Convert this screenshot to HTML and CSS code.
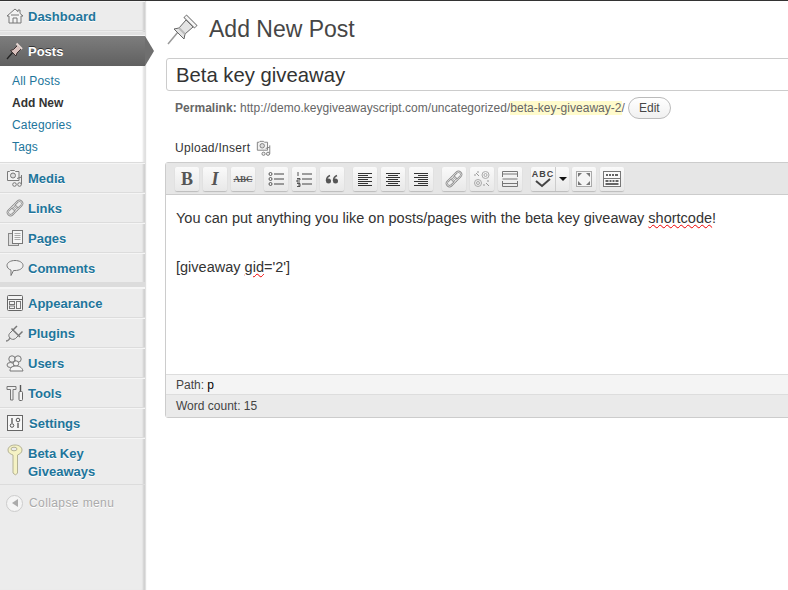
FILE: index.html
```html
<!DOCTYPE html>
<html lang="en">
<head>
  <meta charset="UTF-8">
  <title>Add New Post</title>
  <link rel="stylesheet" href="styles.css">
</head>
<body>
  <svg class="defs" width="0" height="0">
    <symbol id="i-media" viewBox="0 0 18 18">
      <path d="M1.500 2.500h2l1-1h4l1 1h3.500v9H1.500z" fill="#f2f2f2" stroke="#7a7a7a"/>
      <circle cx="7" cy="6.500" r="2.500" fill="#ddd" stroke="#777"/>
      <path d="M15.500 6v9.500M11 9.500l4.500-1.500" fill="none" stroke="#777"/>
      <circle cx="8.500" cy="15.500" r="1.800" fill="#eee" stroke="#777"/>
      <circle cx="13.500" cy="15.500" r="1.800" fill="#eee" stroke="#777"/>
    </symbol>
    <symbol id="i-link" viewBox="0 0 20 20">
      <g transform="rotate(-45 10 10)" fill="none">
        <rect x="0" y="7" width="12" height="6" rx="3" stroke="#8a8a8a" stroke-width="2.400"/>
        <rect x="8" y="7" width="12" height="6" rx="3" stroke="#8a8a8a" stroke-width="2.400"/>
        <rect x="0" y="7" width="12" height="6" rx="3" stroke="#f4f4f4" stroke-width=".8"/>
        <rect x="8" y="7" width="12" height="6" rx="3" stroke="#f4f4f4" stroke-width=".8"/>
      </g>
    </symbol>
  </svg>

  <div class="topline"></div>
  <div class="layout">
    <nav class="sidebar">
      <a class="item">
        <svg class="ico" viewBox="0 0 18 18"><path d="M1 9l8-7 3 2.600V3h2v3.400L17 9h-2v7H3V9z" fill="#f3f3f3" stroke="#777"/><path d="M7 16v-5h4v5M5 8h8" fill="none" stroke="#777"/></svg>
        Dashboard
      </a>
      <div class="sep"></div>
      <a class="item current">
        <svg class="ico" viewBox="0 0 18 18"><path d="M1 17l6-7" stroke="#222" stroke-width="1.300"/><path d="M4.500 8.500l3-1 4-4 3.500 3.500-4 4-1 3z" fill="#d8c0bc" stroke="#3c3030"/><path d="M10.500 1.500l5.500 5.500" stroke="#e8d8d4" stroke-width="2"/></svg>
        Posts
      </a>
      <ul class="submenu">
        <li>All Posts</li>
        <li class="on">Add New</li>
        <li>Categories</li>
        <li>Tags</li>
      </ul>
      <a class="item"><svg class="ico"><use href="#i-media"/></svg>Media</a>
      <a class="item"><svg class="ico"><use href="#i-link"/></svg>Links</a>
      <a class="item">
        <svg class="ico" viewBox="0 0 18 18"><rect x="2.500" y="4.500" width="10" height="12" fill="#ddd" stroke="#888"/><rect x="6.500" y="1.500" width="10" height="13" fill="#f6f6f6" stroke="#777"/><path d="M8.500 4.500h6M8.500 6.500h6M8.500 8.500h6M8.500 10.500h6" stroke="#aaa"/></svg>
        Pages
      </a>
      <a class="item comments">
        <svg class="ico" viewBox="0 0 18 18"><path d="M9 1.500c4.200 0 8 1.900 8 5s-3.700 5-8 5H7.500L5 16.500v-5.400C2.800 10.300 1 8.700 1 6.500c0-3.100 3.800-5 8-5z" fill="#f0f0f0" stroke="#777"/></svg>
        Comments
      </a>
      <div class="sep wide"></div>
      <a class="item">
        <svg class="ico" viewBox="0 0 18 18"><rect x="1.500" y="1.500" width="15" height="15" rx="1" fill="#f4f4f4" stroke="#666"/><path d="M1.500 5.500h15" stroke="#666"/><rect x="3.500" y="7.500" width="5" height="3" fill="none" stroke="#777"/><rect x="3.500" y="12" width="5" height="2.500" fill="none" stroke="#777"/><rect x="10.500" y="7.500" width="4" height="7" fill="none" stroke="#777"/></svg>
        Appearance
      </a>
      <a class="item">
        <svg class="ico" viewBox="0 0 18 18"><path d="M0 17c2 0 3-1 4-3" fill="none" stroke="#888" stroke-width="1.500"/><path d="M3.500 9.500l3.500-3.500 5.500 5.500-3 3c-2 1.500-4 1-5.500-.5s-1.500-3-.5-4.500z" fill="#e8e8e8" stroke="#777"/><path d="M7 6l4-4M12.500 11.500l4-4M5.500 4.500l8.500 8.500" fill="none" stroke="#777" stroke-width="1.500"/></svg>
        Plugins
      </a>
      <a class="item">
        <svg class="ico" viewBox="0 0 18 18"><circle cx="6" cy="5" r="3.200" fill="#eee" stroke="#777"/><circle cx="12" cy="5" r="3.200" fill="#eee" stroke="#777"/><ellipse cx="4.500" cy="11" rx="3.500" ry="2.500" fill="#eee" stroke="#777"/><circle cx="10" cy="9.500" r="2.700" fill="#f6f6f6" stroke="#777"/><path d="M4 17c0-4 3-5 6-5s6 1 7 5z" fill="#f6f6f6" stroke="#777"/></svg>
        Users
      </a>
      <a class="item">
        <svg class="ico" viewBox="0 0 18 18"><path d="M1 2.500h9v3H7v10.500H4.500V5.500H1z" fill="#eee" stroke="#777"/><path d="M14.500 1v6" stroke="#555" stroke-width="1.400"/><rect x="13" y="7.500" width="3.500" height="9" rx="1" fill="#f5f5f5" stroke="#666"/></svg>
        Tools
      </a>
      <a class="item">
        <svg class="ico" viewBox="0 0 18 18"><rect x="1.500" y="1.500" width="15" height="15" fill="#f7f7f7" stroke="#666"/><path d="M6 4v5M12 9v5" stroke="#555" stroke-width="1.300"/><circle cx="6" cy="11.500" r="1.800" fill="none" stroke="#555"/><circle cx="12" cy="6" r="1.800" fill="none" stroke="#555"/></svg>
        <span class="nudge">Settings</span>
      </a>
      <a class="item beta">
        <svg class="key" viewBox="0 0 16 32"><path d="M8 1c4 0 7 2 7 5s-2.500 4-4.500 5v18l-2 2-2.500-2V11C3.500 10 1 9 1 6s3-5 7-5z" fill="#f5f2c4" stroke="#b4b296"/><ellipse cx="7" cy="5" rx="3" ry="1.800" fill="#ececec" stroke="#b4b296"/></svg>
        <span>Beta Key<br>Giveaways</span>
      </a>
      <div class="collapse">
        <span class="round"><svg width="8" height="8" viewBox="0 0 8 8"><path d="M7 0v8L1 4z" fill="#aaa"/></svg></span>
        Collapse menu
      </div>
    </nav>

    <main class="main">
      <div class="heading">
        <svg class="pin" viewBox="0 0 32 32"><path d="M1 31l10-12" stroke="#999" stroke-width="1.500"/><path d="M7 16l5-1 7-8 7 7-8 7-1 5z" fill="#e4e4e4" stroke="#666"/><path d="M12 15l6 6" stroke="#bbb" stroke-width="2"/><path d="M18 3l11 11" stroke="#777" stroke-width="4.500"/><path d="M18.500 3.500l10 10" stroke="#f6f6f6" stroke-width="2.500"/></svg>
        <h2>Add New Post</h2>
      </div>
      <div class="titlebox">Beta key giveaway</div>
      <div class="permalink">
        <span class="plink"><strong>Permalink:</strong> http://demo.keygiveawayscript.com/uncategorized/<span class="slug">beta-key-giveaway-2</span>/</span>
        <span class="edit-btn">Edit</span>
      </div>
      <div class="upload">
        <span>Upload/Insert</span>
        <svg class="upload-ico"><use href="#i-media"/></svg>
      </div>
      <div class="editor">
        <div class="toolbar">
          <div class="group">
            <span class="btn serif bold">B</span>
            <span class="btn serif ital">I</span>
            <span class="btn abc">ABC</span>
          </div>
          <div class="group">
            <span class="btn"><svg viewBox="0 0 16 16"><g fill="none" stroke="#555"><circle cx="2.500" cy="3" r="1.500"/><circle cx="2.500" cy="8" r="1.500"/><circle cx="2.500" cy="13" r="1.500"/></g><path d="M6 3h10M6 8h10M6 13h10" stroke="#444"/></svg></span>
            <span class="btn"><svg viewBox="0 0 16 16"><path d="M2 1v4M1 7.500h3v1.500H1v2h3M1 12.500h3v3H1M2 14h2" fill="none" stroke="#444" stroke-width=".9"/><path d="M6 3h10M6 8h10M6 13h10" stroke="#444"/></svg></span>
            <span class="btn"><svg viewBox="0 0 16 16"><g fill="#555"><circle cx="4.500" cy="10" r="2.500"/><circle cx="11.500" cy="10" r="2.500"/></g><path d="M2.500 10c0-3 1-4.500 3.500-5.500M9.500 10c0-3 1-4.500 3.500-5.500" fill="none" stroke="#555" stroke-width="1.500"/></svg></span>
          </div>
          <div class="group">
            <span class="btn"><svg viewBox="0 0 16 16"><path d="M1 2.500h14M1 4.500h10M1 6.500h14M1 8.500h10M1 10.500h14M1 12.500h10M1 14.500h14" stroke="#333"/></svg></span>
            <span class="btn"><svg viewBox="0 0 16 16"><path d="M1 2.500h14M3 4.500h10M1 6.500h14M3 8.500h10M1 10.500h14M3 12.500h10M1 14.500h14" stroke="#333"/></svg></span>
            <span class="btn"><svg viewBox="0 0 16 16"><path d="M1 2.500h14M5 4.500h10M1 6.500h14M5 8.500h10M1 10.500h14M5 12.500h10M1 14.500h14" stroke="#333"/></svg></span>
          </div>
          <div class="group">
            <span class="btn"><svg class="big"><use href="#i-link"/></svg></span>
            <span class="btn"><svg class="big" viewBox="0 0 18 18"><g fill="none" stroke="#aaa"><circle cx="12.500" cy="5" r="3.500"/><circle cx="12.500" cy="5" r="1.500"/><circle cx="5" cy="13" r="3.500"/><circle cx="5" cy="13" r="1.500"/></g><path d="M3 3l3 3M5 1v2M1 5h2M13 13l3 3M11 14v2M14 11h2" stroke="#999"/></svg></span>
            <span class="btn"><svg class="big" viewBox="0 0 18 18"><path d="M1.500 7V1.500h15V7M1.500 11v5.500h15V11M1.500 9h15M1.500 4h15M1.500 13.500h15" fill="none" stroke="#777"/></svg></span>
          </div>
          <div class="group">
            <span class="split">
              <span class="spell"><i>ABC</i><svg width="18" height="10" viewBox="0 0 18 10"><path d="M2 3l6 5L16 1" fill="none" stroke="#444" stroke-width="2"/></svg></span>
              <span class="drop"></span>
            </span>
            <span class="btn"><svg viewBox="0 0 16 16"><rect x=".5" y=".5" width="15" height="15" fill="#f5f5f5" stroke="#aaa"/><path d="M2 2h4L2 6zM14 2v4l-4-4zM2 14v-4l4 4zM14 14h-4l4-4z" fill="#777"/></svg></span>
            <span class="btn"><svg class="big" viewBox="0 0 18 18"><rect x=".5" y="1.500" width="17" height="15" fill="#fafafa" stroke="#777"/><path d="M.5 8.500h17" stroke="#777"/><path d="M3 5h2M6 5h2M9 5h2M12 5h3M2.500 11h3M6.500 11h2M9.500 11h2M12.500 11h3M2.500 14h13" stroke="#333" stroke-width="1.500"/></svg></span>
          </div>
        </div>
        <div class="content">
          <p>You can put anything you like on posts/pages with the beta key giveaway <u>shortcode</u>!</p>
          <p>[giveaway <u>gid</u>='2']</p>
        </div>
        <div class="path">Path: <b>p</b></div>
        <div class="count">Word count: 15</div>
      </div>
    </main>
  </div>
</body>
</html>
```

FILE: styles.css
```css
* {
  box-sizing: border-box;
}
html, body {
  height: 100%;
}
body {
  margin: 0;
  overflow: hidden;
  background: #fff;
  color: #333;
  font-family: "Liberation Sans", Arial, sans-serif;
  font-size: 12px;
}
.defs {
  display: block;
  height: 0;
}
.topline {
  height: 1px;
  background: #333;
}
.layout {
  display: flex;
  height: 589px;
}

/* admin menu */
.sidebar {
  flex: 0 0 145px;
  background: #ececec;
  box-shadow: inset -3px 0 2px -1px rgba(0, 0, 0, 0.12), 1px 0 1px rgba(0, 0, 0, 0.12);
  position: relative;
}
.item {
  display: flex;
  align-items: center;
  height: 30px;
  padding-left: 6px;
  border-top: 1px solid #f5f5f5;
  border-bottom: 1px solid #dcdcdc;
  color: #21759b;
  font-size: 13px;
  font-weight: bold;
  text-shadow: 0 1px 0 #fff;
}
.ico {
  width: 18px;
  height: 18px;
  margin-right: 4px;
  flex: none;
}
.nudge {
  margin-left: 1px;
}
.sep {
  height: 4px;
  background: #e2e2e2;
  border-bottom: 1px solid #f5f5f5;
  margin-top: 1px;
}
.sep.wide {
  height: 5px;
  background: #dcdcdc;
  margin-top: 0;
}
.item.current {
  position: relative;
  border: 0;
  background: linear-gradient(to bottom, #7d7d7d, #606060);
  color: #fff;
  text-shadow: 0 -1px 0 #333;
}
.item.current::after {
  content: "";
  position: absolute;
  left: 145px;
  top: 0;
  border-style: solid;
  border-width: 15px 0 15px 9px;
  border-color: transparent transparent transparent #6f6f6f;
}
.submenu {
  list-style: none;
  margin: 0;
  padding: 4px 0 5px;
  background: #fff;
  height: 97px;
  border-bottom: 1px solid #dcdcdc;
  box-shadow: inset -3px 0 2px -1px rgba(0, 0, 0, 0.12);
}
.submenu li {
  height: 22px;
  line-height: 22px;
  padding-left: 12px;
  color: #21759b;
  letter-spacing: 0.15px;
}
.submenu li.on {
  color: #333;
  font-weight: bold;
  letter-spacing: 0;
}
.beta {
  height: 47px;
  align-items: flex-start;
  line-height: 18px;
  padding-top: 6px;
}
.key {
  width: 16px;
  height: 32px;
  margin: -1px 5px 0 1px;
  flex: none;
}
.collapse {
  display: flex;
  align-items: center;
  gap: 6px;
  height: 36px;
  padding-left: 6px;
  color: #aaa;
  letter-spacing: 0.4px;
  text-shadow: 0 1px 0 #fff;
}
.round {
  display: flex;
  align-items: center;
  justify-content: center;
  width: 17px;
  height: 17px;
  border-radius: 50%;
  border: 1px solid #ccc;
  background: #f4f4f4;
}

/* post form */
.main {
  flex: 1;
  min-width: 0;
  margin-right: -30px;
  padding-left: 21px;
}
.heading {
  display: flex;
  align-items: center;
  height: 57px;
}
.pin {
  width: 32px;
  height: 32px;
  margin: -2px 10px 0 1px;
  flex: none;
}
h2 {
  margin: 0;
  font-size: 23px;
  font-weight: normal;
  color: #464646;
}
.titlebox {
  height: 33px;
  line-height: 32px;
  padding-left: 9px;
  border: 1px solid #ccc;
  border-radius: 3px;
  font-size: 20.300px;
  color: #333;
}
.permalink {
  display: flex;
  align-items: center;
  height: 24px;
  margin-top: 5px;
  padding-left: 9px;
  color: #666;
}
.plink {
  letter-spacing: 0.03px;
}
.slug {
  background: #fffbcc;
}
.edit-btn {
  margin-left: 3px;
  padding: 0 10px;
  height: 22px;
  line-height: 20px;
  border: 1px solid #bbb;
  border-radius: 11px;
  background: linear-gradient(to bottom, #fff, #f0f0f0);
  color: #464646;
}
.upload {
  display: flex;
  align-items: center;
  gap: 6px;
  height: 18px;
  margin-top: 19px;
  padding-left: 9px;
  color: #333;
  letter-spacing: 0.3px;
}
.upload-ico {
  width: 16px;
  height: 16px;
}
.editor {
  margin-top: 5px;
  margin-left: -1px;
  border: 1px solid #ccc;
  border-radius: 3px;
}
.toolbar {
  display: flex;
  gap: 9px;
  height: 32px;
  padding: 4px 0 0 9px;
  background: #e6e6e6;
  border-bottom: 1px solid #ccc;
}
.group {
  display: flex;
  gap: 4px;
}
.btn, .split {
  display: flex;
  align-items: center;
  justify-content: center;
  height: 24px;
  background: linear-gradient(to bottom, #fafafa, #e8e8e8);
  border-radius: 2px;
  box-shadow: 0 1px 1px #bbb;
}
.btn {
  width: 24px;
}
.btn svg {
  width: 16px;
  height: 16px;
}
.btn svg.big {
  width: 18px;
  height: 18px;
}
.serif {
  font-family: "Liberation Serif", serif;
  font-size: 18px;
  color: #555;
}
.bold {
  font-weight: bold;
}
.ital {
  font-style: italic;
  font-weight: bold;
}
.abc {
  font-family: "Liberation Serif", serif;
  font-size: 9px;
  font-weight: bold;
  color: #555;
  text-decoration: line-through;
}
.split {
  width: 38px;
  margin-right: -1px;
}
.spell {
  display: flex;
  flex-direction: column;
  align-items: center;
  width: 25px;
  height: 24px;
  padding-top: 3px;
  border-right: 1px solid #ccc;
  font-size: 9px;
  font-weight: bold;
  line-height: 8px;
  color: #444;
}
.spell i {
  font-style: normal;
  letter-spacing: 1px;
}
.drop {
  margin: 0 auto;
  border-style: solid;
  border-width: 4px 4px 0;
  border-color: #111 transparent transparent;
}
.content {
  height: 179px;
  padding: 11px 10px 0;
  background: #fff;
  font-size: 14.530px;
  line-height: 24.500px;
  color: #333;
  white-space: nowrap;
}
.content p {
  margin: 0 0 24.500px;
}
.content u {
  text-decoration: underline wavy #e00;
  text-decoration-thickness: 1px;
}
.path {
  height: 21px;
  line-height: 20px;
  padding-left: 10px;
  background: #f4f4f4;
  border-top: 1px solid #ddd;
  border-bottom: 1px solid #ddd;
  color: #444;
}
.path b {
  font-weight: normal;
  color: #000;
}
.count {
  height: 22px;
  line-height: 22px;
  padding-left: 10px;
  background: #eaeaea;
  color: #444;
}
```
